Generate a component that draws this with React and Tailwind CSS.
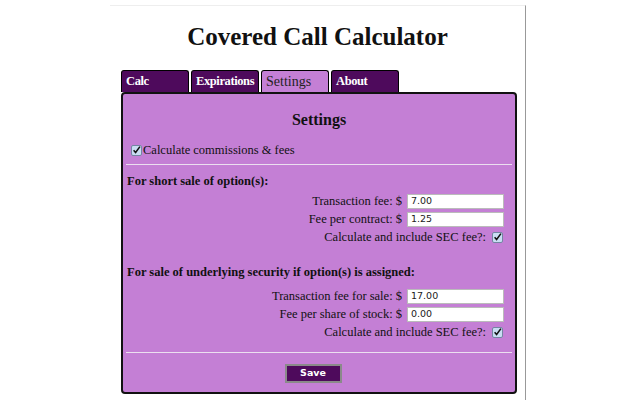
const Check = ({ className = "" }) => (
  <span
    className={`inline-flex h-[11px] w-[11px] items-center justify-center rounded-[2px] border border-[#7486a3] bg-[#c9ddf3] ${className}`}
  >
    <svg viewBox="0 0 10 10" className="h-[10px] w-[10px]">
      <path
        d="M1.8 5.2 L4 7.8 L8.8 1.2"
        fill="none"
        stroke="#111"
        strokeWidth="1.7"
      />
    </svg>
  </span>
);

const tabs = [
  { label: "Calc", active: false },
  { label: "Expirations", active: false },
  { label: "Settings", active: true },
  { label: "About", active: false },
];

const FeeRow = ({ label, value }) => (
  <div className="flex h-[18px] items-center justify-end gap-[5px]">
    <span>{label}</span>
    <span className="flex h-[15px] w-[97px] items-center border border-[#bbb] bg-white px-[3px] font-['DejaVu_Sans',sans-serif] text-[9.5px] text-[#222]">
      {value}
    </span>
  </div>
);

const SecRow = () => (
  <div className="flex h-[18px] items-center justify-end gap-[6px] pr-[1px]">
    <span>Calculate and include SEC fee?:</span>
    <Check />
  </div>
);

export default function App() {
  return (
    <div className="min-h-[400px] bg-white font-['Liberation_Serif',serif] text-[#111]">
      <div className="ml-[110px] mt-[5px] h-[395px] w-[416px] border-t border-r border-t-[#eee] border-r-[#999]">
        <h1 className="mt-[16px] text-center text-[25px] font-bold leading-[30px]">
          Covered Call Calculator
        </h1>

        <div className="ml-[11px] mt-[18px] flex gap-[2px]">
          {tabs.map((tab) => (
            <div
              key={tab.label}
              className={`h-[22px] w-[68px] rounded-t-[3px] border border-b-0 border-black px-[4px] leading-[21px] ${
                tab.active
                  ? "bg-[#c47fd5] text-[14px] font-normal text-[#222]"
                  : "bg-[#4e0a5c] text-[12.5px] font-bold tracking-[-0.4px] text-white"
              }`}
            >
              {tab.label}
            </div>
          ))}
        </div>

        <div className="ml-[11px] w-[396px] rounded-[4px] border-2 border-[#111] bg-[#c47fd5] px-[3px] pb-[9px] text-[12.5px]">
          <h2 className="mt-[16px] text-center text-[16px] font-bold leading-[20px]">
            Settings
          </h2>

          <div className="mt-[11px] flex h-[18px] items-center pl-[5px]">
            <Check />
            <span className="ml-[1px]">Calculate commissions &amp; fees</span>
          </div>

          <div className="mt-[5px] border-t border-[#ecdff0]" />

          <div className="mt-[7px] pl-[1px] font-bold leading-[18px]">
            For short sale of option(s):
          </div>
          <div className="mt-[2px] pr-[8px]">
            <FeeRow label="Transaction fee: $" value="7.00" />
            <FeeRow label="Fee per contract: $" value="1.25" />
            <SecRow />
          </div>

          <div className="mt-[17px] pl-[1px] font-bold leading-[18px]">
            For sale of underlying security if option(s) is assigned:
          </div>
          <div className="mt-[6px] pr-[8px]">
            <FeeRow label="Transaction fee for sale: $" value="17.00" />
            <FeeRow label="Fee per share of stock: $" value="0.00" />
            <SecRow />
          </div>

          <div className="mt-[11px] border-t border-[#ecdff0]" />

          <div className="mt-[11px] flex justify-center pr-[12px]">
            <button
              type="button"
              className="h-[19px] w-[57px] border-2 border-[#8a8a8a] bg-[#4e0a5c] font-['DejaVu_Sans',sans-serif] text-[9.5px] font-bold text-white"
            >
              Save
            </button>
          </div>
        </div>
      </div>
    </div>
  );
}
